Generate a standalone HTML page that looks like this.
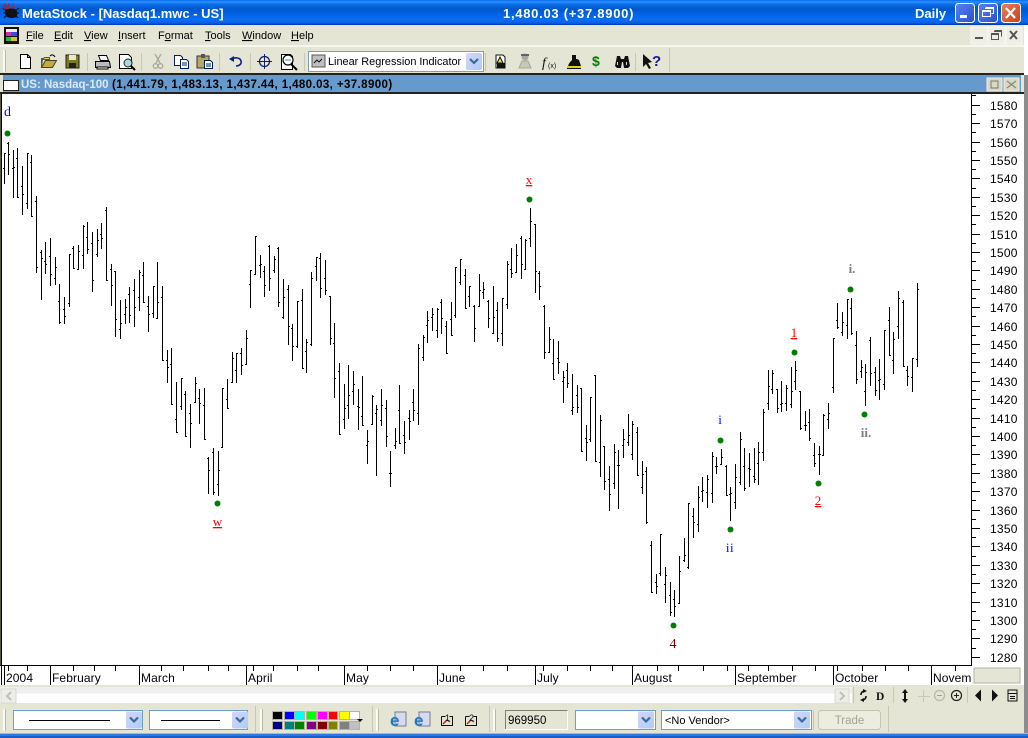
<!DOCTYPE html>
<html><head><meta charset="utf-8"><title>MetaStock</title>
<style>
html,body{margin:0;padding:0;width:1028px;height:738px;overflow:hidden;background:#e5e5d5}
svg{position:absolute;left:0;top:0;display:block}
text{font-family:"Liberation Sans",sans-serif}
.m{font-size:11px;fill:#000}
.a{font-size:12px;fill:#000;letter-spacing:.25px}
.t{font-size:12px;fill:#000;letter-spacing:.1px}
.s{font-family:"Liberation Serif",serif;text-anchor:middle}
.c{shape-rendering:crispEdges}
</style></head><body>
<svg width="1028" height="738" viewBox="0 0 1028 738">
<defs>
<linearGradient id="tb" x1="0" y1="0" x2="0" y2="1">
<stop offset="0" stop-color="#0a6cf0"/><stop offset=".08" stop-color="#2a90ff"/><stop offset=".18" stop-color="#0a6ce8"/><stop offset=".36" stop-color="#0058c8"/><stop offset=".5" stop-color="#005fe0"/><stop offset=".8" stop-color="#0a6df2"/><stop offset=".92" stop-color="#0a5fe4"/><stop offset="1" stop-color="#0036ac"/>
</linearGradient>
<linearGradient id="cb" x1="0" y1="0" x2="1" y2="1"><stop offset="0" stop-color="#d3d6f8"/><stop offset="1" stop-color="#aecdf6"/></linearGradient>
<linearGradient id="bb" x1="0" y1="0" x2="1" y2="1"><stop offset="0" stop-color="#5a82ee"/><stop offset="1" stop-color="#2a4fd0"/></linearGradient>
<linearGradient id="rb" x1="0" y1="0" x2="1" y2="1"><stop offset="0" stop-color="#e8805a"/><stop offset="1" stop-color="#c8401a"/></linearGradient>
<g id="cbtn"><rect x="0" y="0" width="16" height="17" rx="2" fill="url(#cb)"/><path d="M4 6l4 4 4-4" fill="none" stroke="#3a6a9a" stroke-width="2.2"/></g>
</defs>

<!-- base -->
<rect class="c" width="1028" height="738" fill="#e5e5d5"/>
<rect class="c" x="1024" y="25" width="4" height="50" fill="#fff"/>
<rect class="c" x="1024" y="75" width="4" height="658" fill="#8c8c8c"/>

<!-- title bar -->
<rect class="c" width="1028" height="25" fill="url(#tb)"/>
<g>
<path d="M5 11c2-3 8-4 11-1 2 2 2 5 0 7-3 2-8 1-10-1-1-2-2-3-1-5z" fill="#111"/>
<path d="M3 8l4 3M3 13l3 0M4 18l3-3M19 8l-4 3M19 13l-3 0M18 18l-3-3" stroke="#111" stroke-width="1"/>
<text x="3" y="9" font-size="8" font-weight="bold" fill="#d01010" style="font-family:'Liberation Serif',serif">MS</text>
</g>
<text x="22" y="18" font-size="13" font-weight="bold" fill="#fff">MetaStock - [Nasdaq1.mwc - US]</text>
<text x="503" y="18" font-size="13" font-weight="bold" fill="#fff" letter-spacing=".72">1,480.03 (+37.8900)</text>
<text x="915" y="18" font-size="13" font-weight="bold" fill="#fff">Daily</text>
<rect x="955.5" y="3.5" width="19" height="19" rx="3" fill="url(#bb)" stroke="#fff"/>
<rect class="c" x="960" y="15" width="7" height="3" fill="#fff"/>
<rect x="978.5" y="3.5" width="19" height="19" rx="3" fill="url(#bb)" stroke="#fff"/>
<path class="c" d="M985.5 7.5h8v6h-2M982.5 10.5h8v6h-8zM985 8.5h8M982 11.5h8" fill="none" stroke="#fff"/>
<rect x="1001.5" y="3.5" width="19" height="19" rx="3" fill="url(#rb)" stroke="#fff"/>
<path d="M1006 8l9 10M1015 8l-9 10" stroke="#fff" stroke-width="2.2"/>

<!-- menu bar -->
<rect class="c" x="0" y="25" width="1024" height="20" fill="#e5e5d5"/>
<rect class="c" x="4" y="27" width="15" height="17" fill="#111"/>
<rect class="c" x="6" y="29" width="11" height="4" fill="#eee"/>
<rect class="c" x="6" y="32" width="11" height="4" fill="#d030a0"/>
<rect class="c" x="11" y="32" width="6" height="4" fill="#3050e0"/>
<rect class="c" x="6" y="37" width="11" height="4" fill="#30b040"/>
<rect class="c" x="11" y="37" width="6" height="4" fill="#e0c020"/>
<text class="m" x="26" y="39"><tspan text-decoration="underline">F</tspan>ile</text>
<text class="m" x="54" y="39"><tspan text-decoration="underline">E</tspan>dit</text>
<text class="m" x="84" y="39"><tspan text-decoration="underline">V</tspan>iew</text>
<text class="m" x="118" y="39"><tspan text-decoration="underline">I</tspan>nsert</text>
<text class="m" x="158" y="39">F<tspan text-decoration="underline">o</tspan>rmat</text>
<text class="m" x="205" y="39"><tspan text-decoration="underline">T</tspan>ools</text>
<text class="m" x="242" y="39"><tspan text-decoration="underline">W</tspan>indow</text>
<text class="m" x="291" y="39"><tspan text-decoration="underline">H</tspan>elp</text>
<g class="c">
<rect x="971" y="27" width="17" height="17" fill="#eeeee4" stroke="#f8f8f2"/>
<rect x="988" y="27" width="17" height="17" fill="#eeeee4" stroke="#f8f8f2"/>
<rect x="1006" y="27" width="16" height="17" fill="#eeeee4" stroke="#f8f8f2"/>
<rect x="975" y="37" width="8" height="2" fill="#555"/>
<path d="M994.5 30.5h7v6M991.5 33.5h7v6h-7zM994 31.5h7M991 34.5h7" fill="none" stroke="#555"/>
</g>
<path d="M1010 31l7 8M1017 31l-7 8" stroke="#555" stroke-width="2"/>

<!-- toolbar -->
<rect class="c" x="0" y="45" width="1024" height="2" fill="#f7f7f0"/>
<rect class="c" x="3" y="50" width="2" height="22" fill="#fbfbf6"/>
<rect class="c" x="5" y="50" width="1" height="22" fill="#b8b89c"/>
<g class="c" fill="#c8c8b0">
<rect x="87" y="53" width="1" height="18"/><rect x="141" y="53" width="1" height="18"/><rect x="219" y="53" width="1" height="18"/><rect x="250" y="53" width="1" height="18"/><rect x="304" y="53" width="1" height="18"/><rect x="485" y="53" width="1" height="18"/><rect x="635" y="53" width="1" height="18"/><rect x="669" y="48" width="1" height="24"/>
</g>
<!-- new -->
<path d="M20.5 54.5h7l3 3v11h-10z" fill="#fff" stroke="#000"/><path d="M27.5 54.5v3h3" fill="none" stroke="#000"/>
<!-- open -->
<path d="M41.5 67.5v-9h2l1-1h5v2h-7z" fill="#e8d050" stroke="#554"/><path d="M41.5 67.5l4-7h11l-4 7z" fill="#c8a838" stroke="#443"/><path d="M50 56c2-2 4-1 5 1" fill="none" stroke="#000"/>
<!-- save -->
<rect class="c" x="66" y="55" width="13" height="13" fill="#7b7b20" stroke="#222" stroke-width="1"/><rect class="c" x="69" y="55" width="7" height="5" fill="#e8e8d0"/><rect class="c" x="69" y="63" width="7" height="5" fill="#222"/>
<!-- print -->
<path d="M98.5 55.5h8l2 5h-8z" fill="#fff" stroke="#000"/><path d="M95.5 61.5h14l1 6h-15z" fill="#bbb" stroke="#000"/><path d="M97 69h11v-2H97z" fill="#fff" stroke="#000"/>
<!-- preview -->
<path d="M119.5 54.5h9l3 3v11h-12z" fill="#fff" stroke="#000"/><circle cx="128" cy="63" r="4" fill="#a8d8d8" stroke="#222"/><path d="M131 66l4 4" stroke="#000" stroke-width="2"/>
<!-- cut -->
<path d="M155 54l5 9M161 54l-5 9" stroke="#aaa89a" stroke-width="1.3" fill="none"/><circle cx="155.5" cy="66" r="2.3" fill="none" stroke="#aaa89a" stroke-width="1.3"/><circle cx="160.5" cy="66" r="2.3" fill="none" stroke="#aaa89a" stroke-width="1.3"/>
<!-- copy -->
<path d="M174.5 55.5h6l2 2v8h-8z" fill="#fff" stroke="#002060"/><path d="M180.5 59.5h6l2 2v7h-8z" fill="#fff" stroke="#002060"/><path d="M182 63h5M182 65h5" stroke="#002060"/>
<!-- paste -->
<rect class="c" x="197" y="56" width="12" height="12" fill="#b8a868" stroke="#333"/><rect class="c" x="201" y="54" width="4" height="4" fill="#555"/><path d="M204.500 60.500h6l2 2v6h-8z" fill="#fff" stroke="#002060"/><path d="M206 64h5M206 66h5" stroke="#002060"/>
<!-- undo -->
<path d="M231 60c3-3 9-3 10 1 1 3-2 5-5 5" fill="none" stroke="#102090" stroke-width="1.6"/><path d="M229 59l5-3v6z" fill="#102090"/>
<!-- crosshair -->
<circle cx="264.500" cy="61.500" r="5" fill="none" stroke="#102070" stroke-width="1.3"/><path class="c" d="M264.500 54v15M257 61.500h15" stroke="#102070"/>
<!-- zoom -->
<path d="M281.500 54.500h9l2 2v13h-11z" fill="#fff" stroke="#000"/><circle cx="288" cy="60" r="5" fill="#fff" stroke="#000" stroke-width="1.2"/><path d="M285 60h6" stroke="#30a0a0"/><path d="M291 64l6 6" stroke="#000" stroke-width="2"/>
<!-- combo -->
<rect class="c" x="308.500" y="51.500" width="175" height="20" fill="#fff" stroke="#7f9db9"/>
<rect class="c" x="312" y="55" width="13" height="12" fill="#c0c0c0" stroke="#555"/>
<path d="M314 63l3-3 2 2 3-3" fill="none" stroke="#111"/>
<text class="m" x="328" y="65" style="font-size:10.9px">Linear Regression Indicator</text>
<use href="#cbtn" x="466" y="53"/>
<!-- right icons -->
<path d="M496 55h7l2 2v11h-9z" fill="#fff" stroke="#111"/><path d="M500 57l3 6h-6z" fill="#e8e020" stroke="#111"/><rect class="c" x="497" y="63" width="8" height="5" fill="#111"/>
<circle cx="525" cy="57" r="3.500" fill="#aaa8a0"/><path class="c" d="M521 54h8v2h-8z" fill="#606070"/><path d="M519 68l3-7h6l3 7z" fill="#c8c8b8" stroke="#a8a898"/>
<text x="542" y="67" font-size="14" font-style="italic" fill="#111" style="font-family:'Liberation Serif',serif">f</text><text x="548" y="68" font-size="7" fill="#111">(x)</text>
<path d="M572 55h4v8h-4zM568 66c2-6 7-9 11-6l2 6z" fill="#111"/><rect class="c" x="567" y="66" width="14" height="2" fill="#e0d020"/><rect class="c" x="567" y="68" width="14" height="1" fill="#111"/>
<text x="592" y="66" font-size="14" font-weight="bold" fill="#008000">$</text>
<path d="M615 66l2-10h3l1 3h3l1-3h3l2 10-2 2h-4l-1-6h-1l-1 6h-4z" fill="#111"/><rect class="c" x="617" y="62" width="1" height="3" fill="#ddd"/><rect class="c" x="626" y="62" width="1" height="3" fill="#ddd"/>
<path d="M643 54l9 8-4 1 3 5-2 1-3-5-3 3z" fill="#111"/><text x="652" y="66" font-size="15" font-weight="bold" fill="#101c8c">?</text>

<!-- chart window title -->
<rect class="c" x="0" y="73" width="1024" height="2" fill="#222"/>
<rect class="c" x="0" y="75" width="1024" height="17" fill="#6699cc"/>
<rect class="c" x="0" y="75" width="3" height="17" fill="#e5e5d5"/>
<rect class="c" x="1021" y="75" width="3" height="17" fill="#e5e5d5"/>
<rect class="c" x="3.500" y="80.500" width="15" height="10" fill="#fff" stroke="#222"/>
<text x="21" y="88" font-size="11.500" font-weight="bold" fill="#d8eaf8">US: Nasdaq-100</text>
<text x="112" y="88" font-size="11.500" font-weight="bold" fill="#000" letter-spacing=".4">(1,441.79, 1,483.13, 1,437.44, 1,480.03, +37.8900)</text>
<g class="c">
<rect x="987" y="78" width="15" height="13" fill="#d8d8c4" stroke="#f0f0e8"/>
<rect x="991" y="81" width="7" height="7" fill="none" stroke="#777"/>
<rect x="1004" y="78" width="15" height="13" fill="#d8d8c4" stroke="#f0f0e8"/>
</g>
<path d="M1007 81l9 7M1016 81l-9 7" stroke="#8a8a78" stroke-width="1.300"/>

<!-- chart -->
<rect class="c" x="0" y="92" width="1024" height="2" fill="#222"/>
<rect class="c" x="0" y="94" width="1024" height="591" fill="#fff"/>
<rect class="c" x="0" y="94" width="1" height="571" fill="#5a5a40"/>
<rect class="c" x="1" y="94" width="1" height="571" fill="#000"/>
<rect class="c" x="971" y="94" width="1" height="572" fill="#000"/>
<rect class="c" x="0" y="665" width="972" height="1" fill="#000"/>

<!-- price axis ticks -->
<path class="c" fill="none" stroke="#000" d="M972 95.500h4M972 105.500h8M972 114.500h4M972 123.500h8M972 132.500h4M972 142.500h8M972 151.500h4M972 160.500h8M972 169.500h4M972 178.500h8M972 188.500h4M972 197.500h8M972 206.500h4M972 215.500h8M972 224.500h4M972 234.500h8M972 243.500h4M972 252.500h8M972 261.500h4M972 270.500h8M972 280.500h4M972 289.500h8M972 298.500h4M972 307.500h8M972 316.500h4M972 326.500h8M972 335.500h4M972 344.500h8M972 353.500h4M972 362.500h8M972 372.500h4M972 381.500h8M972 390.500h4M972 399.500h8M972 408.500h4M972 418.500h8M972 427.500h4M972 436.500h8M972 445.500h4M972 454.500h8M972 464.500h4M972 473.500h8M972 482.500h4M972 491.500h8M972 500.500h4M972 510.500h8M972 519.500h4M972 528.500h8M972 537.500h4M972 546.500h8M972 556.500h4M972 565.500h8M972 574.500h4M972 583.500h8M972 592.500h4M972 602.500h8M972 611.500h4M972 620.500h8M972 629.500h4M972 638.500h8M972 648.500h4M972 657.500h8"/>
<g class="a" transform="translate(0,-1)">
<text x="990" y="111">1580</text><text x="990" y="129">1570</text><text x="990" y="148">1560</text><text x="990" y="166">1550</text><text x="990" y="184">1540</text><text x="990" y="203">1530</text><text x="990" y="221">1520</text><text x="990" y="240">1510</text><text x="990" y="258">1500</text><text x="990" y="276">1490</text><text x="990" y="295">1480</text><text x="990" y="313">1470</text><text x="990" y="332">1460</text><text x="990" y="350">1450</text><text x="990" y="368">1440</text><text x="990" y="387">1430</text><text x="990" y="405">1420</text><text x="990" y="424">1410</text><text x="990" y="442">1400</text><text x="990" y="460">1390</text><text x="990" y="479">1380</text><text x="990" y="497">1370</text><text x="990" y="516">1360</text><text x="990" y="534">1350</text><text x="990" y="552">1340</text><text x="990" y="571">1330</text><text x="990" y="589">1320</text><text x="990" y="608">1310</text><text x="990" y="626">1300</text><text x="990" y="644">1290</text><text x="990" y="663">1280</text>
</g>

<!-- time axis -->
<path class="c" fill="none" stroke="#000" d="M1.500 666v19M4.500 666v19M50.500 666v19M139.500 666v19M246.500 666v19M344.500 666v19M437.500 666v19M535.500 666v19M632.500 666v19M735.500 666v19M833.500 666v19M931.500 666v19M8.500 666v5M27.500 666v5M73.500 666v5M94.500 666v5M115.500 666v5M161.500 666v5M183.500 666v5M208.500 666v5M228.500 666v5M253.500 666v5M273.500 666v5M297.500 666v5M318.500 666v5M367.500 666v5M390.500 666v5M413.500 666v5M460.500 666v5M483.500 666v5M507.500 666v5M543.500 666v5M567.500 666v5M590.500 666v5M612.500 666v5M657.500 666v5M678.500 666v5M703.500 666v5M727.500 666v5M748.500 666v5M768.500 666v5M792.500 666v5M815.500 666v5M837.500 666v5M862.500 666v5M885.500 666v5M908.500 666v5M955.500 666v5"/>
<g class="t">
<text x="6" y="682">2004</text><text x="52" y="682">February</text><text x="141" y="682">March</text><text x="248" y="682">April</text><text x="346" y="682">May</text><text x="439" y="682">June</text><text x="537" y="682">July</text><text x="634" y="682">August</text><text x="737" y="682">September</text><text x="835" y="682">October</text><text x="933" y="682">Novem</text>
</g>
<rect class="c" x="972" y="666" width="52" height="19" fill="#fff"/>
<rect class="c" x="974" y="668" width="46" height="15" fill="#e5e5d5" stroke="#b4b49a"/>

<!-- scrollbar row -->
<rect class="c" x="0" y="685" width="1024" height="2" fill="#e5e5d5"/>
<rect class="c" x="0" y="687" width="852" height="6" fill="#efefef"/>
<rect class="c" x="0" y="693" width="852" height="1" fill="#fdf6e8"/>
<rect class="c" x="0" y="694" width="852" height="9" fill="#fff"/>
<rect class="c" x="852" y="685" width="172" height="19" fill="#e5e5d5"/>
<rect class="c" x="1" y="689" width="15" height="14" fill="#eeeee8" stroke="#d8d8d0"/>
<path d="M11 692l-4 4 4 4" fill="none" stroke="#c0c0b8" stroke-width="2"/>
<rect class="c" x="835" y="689" width="14" height="14" fill="#eeeee8" stroke="#d8d8d0"/>
<path d="M840 692l4 4-4 4" fill="none" stroke="#c0c0b8" stroke-width="2"/>
<g class="c" fill="#c8c8b0"><rect x="853" y="687" width="1" height="16"/><rect x="893" y="687" width="1" height="16"/><rect x="967" y="687" width="1" height="16"/></g>
<path d="M861 695c0-3 2-4 4-4M866 696c0 3-2 4-4 4" fill="none" stroke="#111" stroke-width="1.600"/><path d="M863 689l4 2-4 2zM864 698l-4 2 4 2z" fill="#111"/>
<text x="876" y="700" font-size="11.500" font-weight="bold" fill="#111" style="font-family:'Liberation Serif',serif">D</text>
<path d="M905 689l3 4h-6zM905 703l3-4h-6z" fill="#111"/><rect class="c" x="904" y="692" width="2" height="8" fill="#111"/>
<path class="c" d="M923.500 690v12M918 696.500h12" stroke="#c8c8b8"/>
<circle cx="939.500" cy="695.500" r="5" fill="none" stroke="#b8b8a8" stroke-width="1.300"/><path class="c" d="M937 695.500h5" stroke="#a0a090"/>
<circle cx="956.500" cy="695.500" r="5" fill="none" stroke="#222" stroke-width="1.200"/><path class="c" d="M954 695.500h5M956.500 693v5" stroke="#222"/>
<path d="M975 695.500l6-6v12z" fill="#111"/>
<path d="M998 695.500l-6-6v12z" fill="#111"/>
<rect class="c" x="1008" y="690" width="9" height="11" fill="none" stroke="#111"/><path class="c" d="M1008 693.500h9M1010 696.500h5M1010 698.500h5" stroke="#111"/>

<!-- bottom toolbar -->
<rect class="c" x="0" y="704" width="1024" height="29" fill="#e5e5d5"/>
<g class="c" fill="#c8c8b0"><rect x="255" y="706" width="1" height="26"/><rect x="372" y="706" width="1" height="26"/><rect x="489" y="706" width="1" height="26"/><rect x="813" y="710" width="1" height="20"/><rect x="888" y="706" width="1" height="26"/></g>
<g class="c"><rect x="3" y="709" width="2" height="22" fill="#fbfbf6"/><rect x="5" y="709" width="1" height="22" fill="#b8b89c"/><rect x="260" y="709" width="2" height="22" fill="#fbfbf6"/><rect x="262" y="709" width="1" height="22" fill="#b8b89c"/><rect x="376" y="709" width="2" height="22" fill="#fbfbf6"/><rect x="378" y="709" width="1" height="22" fill="#b8b89c"/><rect x="493" y="709" width="2" height="22" fill="#fbfbf6"/><rect x="495" y="709" width="1" height="22" fill="#b8b89c"/></g>
<rect class="c" x="13.500" y="710.500" width="129" height="19" fill="#fff" stroke="#6f9dc9"/>
<rect class="c" x="29" y="720" width="81" height="1" fill="#000"/>
<use href="#cbtn" x="126" y="711.500"/>
<rect class="c" x="149.500" y="710.500" width="98" height="19" fill="#fff" stroke="#6f9dc9"/>
<rect class="c" x="161" y="720" width="59" height="1" fill="#000"/>
<use href="#cbtn" x="232" y="711.500"/>
<!-- swatches -->
<g class="c" stroke="#b4b49a" stroke-width="1">
<rect x="272.500" y="711.500" width="10" height="8" fill="#000"/><rect x="284.500" y="711.500" width="10" height="8" fill="#00f"/><rect x="294.500" y="711.500" width="10" height="8" fill="#0ff"/><rect x="306.500" y="711.500" width="10" height="8" fill="#0f0"/><rect x="317.500" y="711.500" width="10" height="8" fill="#f0f"/><rect x="328.500" y="711.500" width="9" height="8" fill="#f00"/><rect x="339.500" y="711.500" width="10" height="8" fill="#ff0"/><rect x="349.500" y="711.500" width="10" height="8" fill="#fff"/>
<rect x="272.500" y="721.500" width="10" height="8" fill="#000080"/><rect x="284.500" y="721.500" width="10" height="8" fill="#008080"/><rect x="294.500" y="721.500" width="10" height="8" fill="#008000"/><rect x="306.500" y="721.500" width="10" height="8" fill="#800080"/><rect x="317.500" y="721.500" width="10" height="8" fill="#800000"/><rect x="328.500" y="721.500" width="9" height="8" fill="#808000"/><rect x="339.500" y="721.500" width="10" height="8" fill="#808080"/><rect x="349.500" y="721.500" width="10" height="8" fill="#c0c0c0"/>
</g>
<path d="M357 719l3 3 3-3z" fill="#111"/>
<!-- IE icons -->
<g><rect x="395" y="712" width="11" height="14" fill="#d8d8f0" stroke="#708090"/><text x="390" y="726" font-size="17" font-weight="bold" fill="#1a78c8">e</text></g>
<g><rect x="419" y="712" width="11" height="14" fill="#d8d8f0" stroke="#708090"/><text x="414" y="726" font-size="17" font-weight="bold" fill="#1a78c8">e</text></g>
<path class="c" d="M441.500 716.500h4M449.500 716.500h3v9h-11v-9" fill="none" stroke="#111"/><path d="M443 724l4-4 3 2" fill="none" stroke="#d01010" stroke-width="1.300"/><text x="445" y="721" font-size="9" fill="#111">1</text>
<path class="c" d="M465.500 716.500h4M473.500 716.500h3v9h-11v-9" fill="none" stroke="#111"/><path d="M467 724l4-4 3 2" fill="none" stroke="#d01010" stroke-width="1.300"/><text x="469" y="721" font-size="9" fill="#111">2</text>
<!-- field -->
<rect class="c" x="505.500" y="710.500" width="62" height="19" fill="#e5e5d5" stroke="#fff"/>
<path class="c" d="M505.500 729v-18.500h62" fill="none" stroke="#808070"/>
<text x="508" y="724" font-size="11.500" fill="#000">969950</text>
<rect class="c" x="575.500" y="710.500" width="80" height="19" fill="#fff" stroke="#6f9dc9"/>
<use href="#cbtn" x="638" y="711.500"/>
<rect class="c" x="661.500" y="710.500" width="150" height="19" fill="#fff" stroke="#6f9dc9"/>
<text x="665" y="724" font-size="11" fill="#000">&lt;No Vendor&gt;</text>
<use href="#cbtn" x="794" y="711.500"/>
<rect x="818.500" y="710.500" width="62" height="19" rx="3" fill="#ececdf" stroke="#c4c4b0"/>
<text x="849.500" y="724" font-size="11.500" fill="#a4a494" text-anchor="middle">Trade</text>

<!-- bottom blue -->
<rect class="c" x="0" y="733" width="1028" height="1" fill="#a8b8c8"/>
<rect class="c" x="0" y="734" width="1028" height="2" fill="#2a78e0"/>
<rect class="c" x="0" y="736" width="1028" height="2" fill="#1a5cc8"/>

<!-- bars -->
<path class="c" fill="none" stroke="#000" d="M4.500 153V184M3 168.500h1M5 153.500h1M8.500 142V175M7 143.500h1M9 154.500h1M13.500 150V198M12 168.500h1M14 167.500h1M17.500 148V198M16 158.500h1M18 197.500h1M22.500 166V215M21 186.500h1M23 194.500h1M27.500 153V209M26 203.500h1M28 153.500h1M31.500 155V217M30 162.500h1M32 216.500h1M36.500 196V273M35 201.500h1M37 267.500h1M41.500 250V300M40 252.500h1M42 258.500h1M45.500 242V274M44 261.500h1M46 264.500h1M50.500 238V286M49 256.500h1M51 274.500h1M55.500 257V285M54 278.500h1M56 267.500h1M59.500 284V324M58 301.500h1M60 322.500h1M64.500 297V324M63 309.500h1M65 316.500h1M69.500 254V307M68 303.500h1M70 254.500h1M73.500 246V269M72 248.500h1M74 268.500h1M78.500 245V270M77 269.500h1M79 251.500h1M83.500 225V269M82 255.500h1M84 226.500h1M87.500 222V254M86 237.500h1M88 249.500h1M92.500 232V292M91 243.500h1M93 280.500h1M97.500 229V257M96 254.500h1M98 240.500h1M101.500 223V249M100 234.500h1M102 238.500h1M106.500 207V281M105 210.500h1M107 280.500h1M111.500 264V306M110 269.500h1M112 285.500h1M115.500 271V337M114 271.500h1M116 319.500h1M120.500 300V339M119 329.500h1M121 323.500h1M125.500 299V324M124 314.500h1M126 307.500h1M129.500 287V323M128 294.500h1M130 315.500h1M134.500 279V327M133 290.500h1M135 307.500h1M139.500 270V311M138 297.500h1M140 272.500h1M143.500 262V303M142 275.500h1M144 302.500h1M148.500 296V332M147 306.500h1M149 314.500h1M153.500 286V318M152 313.500h1M154 286.500h1M157.500 262V319M156 318.500h1M158 302.500h1M162.500 286V361M161 297.500h1M163 360.500h1M167.500 350V383M166 360.500h1M168 367.500h1M171.500 348V405M170 364.500h1M172 404.500h1M176.500 382V433M175 419.500h1M177 432.500h1M181.500 378V410M180 406.500h1M182 378.500h1M185.500 391V437M184 394.500h1M186 436.500h1M190.500 404V448M189 413.500h1M191 423.500h1M195.500 377V403M194 402.500h1M196 383.500h1M199.500 389V424M198 398.500h1M200 403.500h1M204.500 388V440M203 405.500h1M205 439.500h1M208.500 457V494M207 458.500h1M209 470.500h1M213.500 448V495M212 452.500h1M214 492.500h1M218.500 451V496M217 484.500h1M219 470.500h1M222.500 388V448M221 447.500h1M223 388.500h1M227.500 379V409M226 399.500h1M228 408.500h1M232.500 352V383M231 382.500h1M233 358.500h1M236.500 353V383M235 370.500h1M237 353.500h1M241.500 348V375M240 353.500h1M242 365.500h1M246.500 330V365M245 364.500h1M247 338.500h1"/>
<path class="c" fill="none" stroke="#000" d="M250.500 270V308M249 284.500h1M251 270.500h1M255.500 236V275M254 274.500h1M256 236.500h1M260.500 255V278M259 265.500h1M261 264.500h1M264.500 266V297M263 271.500h1M265 285.500h1M269.500 245V291M268 246.500h1M270 278.500h1M274.500 256V273M273 270.500h1M275 259.500h1M278.500 247V307M277 248.500h1M279 302.500h1M283.500 279V319M282 317.500h1M284 297.500h1M288.500 285V345M287 289.500h1M289 326.500h1M292.500 324V361M291 328.500h1M293 346.500h1M297.500 301V348M296 346.500h1M298 301.500h1M302.500 289V369M301 300.500h1M303 368.500h1M306.500 339V373M305 351.500h1M307 342.500h1M311.500 272V346M310 344.500h1M312 278.500h1M316.500 257V281M315 266.500h1M317 257.500h1M320.500 253V298M319 258.500h1M321 288.500h1M325.500 260V295M324 278.500h1M326 290.500h1M330.500 296V345M329 296.500h1M331 338.500h1M334.500 323V398M333 343.500h1M335 378.500h1M339.500 363V435M338 371.500h1M340 434.500h1M344.500 384V429M343 419.500h1M345 408.500h1M348.500 365V419M347 405.500h1M349 395.500h1M353.500 371V405M352 391.500h1M354 384.500h1M358.500 389V430M357 406.500h1M359 407.500h1M362.500 376V426M361 416.500h1M363 425.500h1M367.500 430V464M366 445.500h1M368 441.500h1M372.500 395V425M371 424.500h1M373 396.500h1M376.500 405V476M375 413.500h1M377 409.500h1M381.500 389V426M380 420.500h1M382 405.500h1M386.500 400V447M385 408.500h1M387 436.500h1M390.500 451V487M389 473.500h1M391 473.500h1M395.500 428V449M394 445.500h1M396 441.500h1M399.500 385V444M398 410.500h1M400 443.500h1M404.500 421V454M403 435.500h1M405 442.500h1M409.500 410V440M408 418.500h1M410 421.500h1M413.500 389V421M412 402.500h1M414 410.500h1M418.500 344V425M417 413.500h1M419 348.500h1M423.500 335V361M422 357.500h1M424 337.500h1M427.500 311V343M426 325.500h1M428 320.500h1M432.500 308V331M431 317.500h1M433 314.500h1M437.500 308V338M436 330.500h1M438 309.500h1M441.500 299V334M440 302.500h1M442 318.500h1M446.500 321V354M445 326.500h1M447 353.500h1M451.500 302V336M450 319.500h1M452 335.500h1M455.500 267V318M454 315.500h1M456 267.500h1M460.500 259V285M459 282.500h1M461 259.500h1M465.500 269V309M464 275.500h1M466 308.500h1M469.500 286V307M468 296.500h1M470 286.500h1M474.500 305V342M473 306.500h1M475 328.500h1M479.500 274V307M478 306.500h1M480 290.500h1M483.500 282V299M482 292.500h1M484 289.500h1M488.500 300V328M487 301.500h1M489 318.500h1M493.500 286V334M492 333.500h1M494 317.500h1M497.500 302V342M496 310.500h1M498 338.500h1"/>
<path class="c" fill="none" stroke="#000" d="M502.500 298V346M501 333.500h1M503 298.500h1M507.500 261V309M506 304.500h1M508 264.500h1M511.500 248V278M510 269.500h1M512 273.500h1M516.500 244V273M515 272.500h1M517 255.500h1M521.500 236V279M520 238.500h1M522 264.500h1M525.500 239V270M524 269.500h1M526 240.500h1M530.500 208V247M529 238.500h1M531 221.500h1M535.500 224V293M534 224.500h1M536 271.500h1M539.500 271V300M538 273.500h1M540 286.500h1M544.500 305V359M543 306.500h1M545 352.500h1M549.500 327V353M548 352.500h1M550 339.500h1M553.500 339V380M552 363.500h1M554 379.500h1M558.500 341V374M557 358.500h1M559 362.500h1M563.500 371V403M562 381.500h1M564 377.500h1M567.500 363V388M566 370.500h1M568 383.500h1M572.500 374V415M571 410.500h1M573 407.500h1M577.500 385V413M576 395.500h1M578 407.500h1M581.500 388V452M580 388.500h1M582 451.500h1M586.500 425V461M585 438.500h1M587 442.500h1M590.500 397V442M589 439.500h1M591 397.500h1M595.500 375V462M594 375.500h1M596 461.500h1M600.500 415V477M599 462.500h1M601 420.500h1M604.500 446V490M603 446.500h1M605 481.500h1M609.500 466V511M608 479.500h1M610 494.500h1M614.500 444V489M613 483.500h1M615 452.500h1M618.500 450V509M617 465.500h1M619 465.500h1M623.500 429V458M622 445.500h1M624 439.500h1M628.500 414V446M627 442.500h1M629 435.500h1M632.500 421V460M631 454.500h1M633 424.500h1M637.500 427V476M636 432.500h1M638 475.500h1M642.500 461V494M641 487.500h1M643 474.500h1M646.500 467V524M645 471.500h1M647 522.500h1M651.500 541V593M650 545.500h1M652 592.500h1M656.500 574V594M655 582.500h1M657 586.500h1M660.500 534V576M659 573.500h1M661 534.500h1M665.500 567V603M664 584.500h1M666 575.500h1M670.500 582V616M669 595.500h1M671 612.500h1M674.500 590V617M673 599.500h1M675 606.500h1M679.500 556V604M678 603.500h1M680 571.500h1M684.500 538V562M683 560.500h1M685 555.500h1M688.500 503V569M687 567.500h1M689 503.500h1M693.500 508V538M692 516.500h1M694 522.500h1M698.500 486V532M697 524.500h1M699 497.500h1M702.500 477V502M701 491.500h1M703 490.500h1M707.500 475V508M706 492.500h1M708 479.500h1M712.500 452V503M711 493.500h1M713 456.500h1M716.500 457V474M715 466.500h1M717 466.500h1M721.500 449V465M720 464.500h1M722 457.500h1M726.500 465V496M725 466.500h1M727 495.500h1M730.500 487V521M729 494.500h1M731 493.500h1M735.500 464V509M734 502.500h1M736 477.500h1M740.500 432V485M739 482.500h1M741 439.500h1M744.500 448V491M743 466.500h1M745 488.500h1M749.500 453V487M748 468.500h1M750 469.500h1M754.500 448V483M753 476.500h1M755 479.500h1M758.500 442V485M757 463.500h1M759 452.500h1"/>
<path class="c" fill="none" stroke="#000" d="M763.500 409V461M762 452.500h1M764 412.500h1M768.500 370V410M767 403.500h1M769 386.500h1M772.500 370V394M771 389.500h1M773 373.500h1M777.500 389V413M776 389.500h1M778 408.500h1M781.500 381V412M780 404.500h1M782 403.500h1M786.500 385V411M785 403.500h1M787 388.500h1M791.500 367V408M790 404.500h1M792 391.500h1M795.500 361V390M794 381.500h1M796 370.500h1M800.500 391V430M799 391.500h1M801 428.500h1M805.500 411V431M804 425.500h1M806 425.500h1M809.500 409V441M808 422.500h1M810 438.500h1M814.500 443V467M813 455.500h1M815 463.500h1M819.500 446V475M818 454.500h1M820 454.500h1M823.500 414V456M822 455.500h1M824 415.500h1M828.500 403V429M827 419.500h1M829 413.500h1M833.500 338V393M832 387.500h1M834 338.500h1M837.500 303V329M836 320.500h1M838 327.500h1M842.500 312V336M841 332.500h1M843 322.500h1M847.500 299V339M846 325.500h1M848 299.500h1M851.500 298V335M850 308.500h1M852 333.500h1M856.500 331V384M855 345.500h1M857 379.500h1M861.500 360V378M860 371.500h1M862 367.500h1M865.500 364V406M864 391.500h1M866 372.500h1M870.500 337V386M869 340.500h1M871 373.500h1M875.500 367V396M874 372.500h1M876 390.500h1M879.500 359V400M878 380.500h1M880 379.500h1M884.500 330V390M883 384.500h1M885 330.500h1M889.500 307V356M888 320.500h1M890 355.500h1M893.500 332V374M892 360.500h1M894 339.500h1M898.500 291V339M897 326.500h1M899 298.500h1M903.500 300V367M902 302.500h1M904 366.500h1M907.500 366V386M906 370.500h1M908 376.500h1M912.500 358V392M911 377.500h1M913 358.500h1M917.500 283V367M916 359.500h1M918 289.500h1"/>

<!-- dots -->
<g fill="#008000">
<circle cx="7.500" cy="133.500" r="3"/><circle cx="529.500" cy="199.500" r="3"/><circle cx="217.500" cy="503.500" r="3"/><circle cx="673.500" cy="625.500" r="3"/><circle cx="720.500" cy="440.500" r="3"/><circle cx="730.500" cy="529.500" r="3"/><circle cx="794.500" cy="352.500" r="3"/><circle cx="818.500" cy="483.500" r="3"/><circle cx="850.500" cy="289.500" r="3"/><circle cx="864.500" cy="414.500" r="3"/>
</g>
<!-- wave labels -->
<text class="s" x="7.500" y="116" font-size="14" fill="#0000ff">d</text>
<text class="s" x="529" y="184" font-size="13" fill="#ff0000" text-decoration="underline">x</text>
<text class="s" x="217.500" y="526" font-size="13" fill="#ff0000" text-decoration="underline">w</text>
<text class="s" x="673" y="648" font-size="14" fill="#800000">4</text>
<text class="s" x="720" y="424" font-size="13" fill="#0000ff">i</text>
<text class="s" x="730" y="552" font-size="13" fill="#0000ff" letter-spacing=".5">ii</text>
<text class="s" x="794" y="337" font-size="13" fill="#ff0000" text-decoration="underline">1</text>
<text class="s" x="818" y="505" font-size="13" fill="#ff0000" text-decoration="underline">2</text>
<text class="s" x="852" y="273" font-size="13" font-weight="bold" fill="#808080">i.</text>
<text class="s" x="866" y="437" font-size="13" font-weight="bold" fill="#808080">ii.</text>
</svg>
</body></html>
